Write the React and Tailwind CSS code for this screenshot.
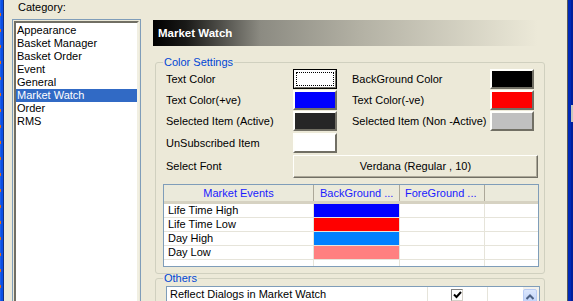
import React from "react";

const font = { fontFamily: '"Liberation Sans", Arial, sans-serif' };

const categories = ["Appearance", "Basket Manager", "Basket Order", "Event", "General", "Market Watch", "Order", "RMS"];

const events = [
  { name: "Life Time High", bg: "bg-[#0000ff]" },
  { name: "Life Time Low", bg: "bg-[#ff0000]" },
  { name: "Day High", bg: "bg-[#0080ff]" },
  { name: "Day Low", bg: "bg-[#ff8080]" },
];

function Swatch({ fill, focused }) {
  if (focused) {
    return (
      <div className="w-[44px] h-[20px] shrink-0 border border-black">
        <div className="w-full h-full border border-t-white border-l-white border-b-[#716f64] border-r-[#716f64] bg-white p-px">
          <div className="w-full h-full border border-dotted border-black" />
        </div>
      </div>
    );
  }
  return (
    <div className={`w-[44px] h-[20px] shrink-0 border-2 border-t-[#fffffb] border-l-[#fffffb] border-b-[#716f64] border-r-[#716f64] ${fill}`} />
  );
}

function Row({ label, fill, rlabel, rfill, focused, className = "" }) {
  return (
    <div className={`flex items-center h-[20px] shrink-0 ${className}`}>
      <div className="w-[127px] shrink-0 truncate">{label}</div>
      <Swatch fill={fill} focused={focused} />
      {rlabel && (
        <>
          <div className="w-[138px] shrink-0 ml-[15px] truncate">{rlabel}</div>
          <Swatch fill={rfill} />
        </>
      )}
    </div>
  );
}

export default function App() {
  return (
    <div className="w-[573px] h-[301px] overflow-hidden flex bg-[#ece9d8] text-[11px] leading-[13px] text-black" style={font}>
      {/* window edge */}
      <div className="w-[4px] h-full flex shrink-0">
        <div className="w-px h-full bg-[repeating-linear-gradient(to_bottom,#1d5fe8_0px,#1d5fe8_13px,#e0701c_13px,#e0701c_16px)]" />
        <div className="w-[2px] h-full bg-[#0a4fe6]" />
        <div className="w-px h-full bg-[#15307a]" />
      </div>

      {/* category column */}
      <div className="w-[148px] h-full flex flex-col shrink-0">
        <div className="pl-[14px] pt-px h-[19px] shrink-0">Category:</div>
        <div className="ml-[8px] w-[129px] flex-1 border border-[#7f9db9] border-b-0 pt-px pl-px pr-px bg-[#ece9d8]">
          <div className="h-full border-2 border-b-0 border-t-[#716f64] border-l-[#716f64] border-r-[#f1efe2] bg-white pt-px">
            {categories.map((c) => (
              <div
                key={c}
                className={`h-[13px] pl-px leading-[13px] ${c === "Market Watch" ? "bg-[#316ac5] text-white" : ""}`}
              >
                {c}
              </div>
            ))}
          </div>
        </div>
      </div>

      {/* settings panel */}
      <div className="w-[415px] h-full flex flex-col shrink-0">
        <div className="shrink-0 mt-[20px] ml-px h-[26px] flex items-center pl-[5px] font-bold text-[11.5px] text-white bg-[linear-gradient(to_right,#000000_0%,#1a1a18_8%,#8c8b82_26%,#b3b1a4_50%,#ece9d8_93%)]">
          Market Watch
        </div>

        <fieldset className="shrink-0 mt-[10px] ml-[3px] w-[390px] border border-[#d0d0bf] rounded-[3px] pb-[6px]">
          <legend className="ml-[7px] px-px text-[#0046d5] leading-[13px]">Color Settings</legend>
          <div className="pl-[10px]">
            <Row label="Text Color" focused rlabel="BackGround Color" rfill="bg-black" />
            <Row className="mt-px" label="Text Color(+ve)" fill="bg-[#0000ff]" rlabel="Text Color(-ve)" rfill="bg-[#ff0000]" />
            <Row className="mt-px" label="Selected Item (Active)" fill="bg-[#262626]" rlabel="Selected Item (Non -Active)" rfill="bg-[#c0c0c0]" />
            <Row className="mt-[2px]" label="UnSubscribed Item" fill="bg-white" />
            <div className="flex items-center h-[23px] mt-[2px]">
              <div className="w-[127px] shrink-0">Select Font</div>
              <div className="w-[245px] h-full shrink-0 flex items-center justify-center border border-t-[#fffffb] border-l-[#fffffb] border-b-[#716f64] border-r-[#716f64] shadow-[inset_-1px_-1px_0_#aca899] bg-[#ece9d8]">
                Verdana (Regular , 10)
              </div>
            </div>
          </div>

          {/* events table */}
          <div className="ml-[7px] mt-[6px] w-[376px] h-[83px] border border-[#7f9db9] bg-white overflow-hidden">
            <div className="flex h-[19px] bg-[#ebeadb] border-b-[3px] border-[#d6d2c2] text-[#1a1aff]">
              <div className="w-[150px] shrink-0 flex items-center justify-center border-r border-[#aca899]">Market Events</div>
              <div className="w-[86px] shrink-0 flex items-center pl-[6px] border-r border-[#aca899] truncate">BackGround ...</div>
              <div className="w-[85px] shrink-0 flex items-center pl-[5px] border-r border-[#aca899] truncate">ForeGround ...</div>
              <div className="flex-1" />
            </div>
            {[...events, { name: "", bg: "" }].map((e, i) => (
              <div key={i} className="flex h-[14px] border-b border-[#e6e4da]">
                <div className="w-[150px] shrink-0 pl-[4px] border-r border-[#e6e4da] leading-[13px]">{e.name}</div>
                <div className={`w-[86px] shrink-0 border-r border-[#e6e4da] ${e.bg}`} />
                <div className="w-[85px] shrink-0 border-r border-[#e6e4da]" />
                <div className="flex-1" />
              </div>
            ))}
          </div>
        </fieldset>

        <fieldset className="shrink-0 -mt-[2px] ml-[3px] w-[390px] h-[60px] border border-[#d0d0bf] rounded-[3px]">
          <legend className="ml-[7px] px-px text-[#0046d5] leading-[13px]">Others</legend>
          <div className="ml-[10px] mt-[1px] w-[374px] h-[30px] border border-[#7f9db9] bg-white flex">
            <div className="flex-1">
              <div className="flex h-[15px] border-b border-[#e6e4da]">
                <div className="w-[261px] shrink-0 pl-[3px] flex items-center border-r border-[#e6e4da]">Reflect Dialogs in Market Watch</div>
                <div className="w-[60px] shrink-0 border-r border-[#e6e4da] flex items-start pt-[2px] pl-[23px]">
                  <div className="w-[12px] h-[12px] border border-[#808080] border-r-[#d4d0c8] border-b-[#d4d0c8] bg-white flex items-center justify-center">
                    <svg width="9" height="8" viewBox="0 0 9 8">
                      <path d="M1 3.5 L3.5 6 L8 1" fill="none" stroke="#000" strokeWidth="2" />
                    </svg>
                  </div>
                </div>
                <div className="flex-1" />
              </div>
              <div className="flex h-[14px]">
                <div className="w-[261px] shrink-0 border-r border-[#e6e4da]" />
                <div className="w-[60px] shrink-0 border-r border-[#e6e4da] pl-[23px] pt-px">
                  <div className="w-[12px] h-[12px] border border-[#808080] bg-white" />
                </div>
              </div>
            </div>
            <div className="w-[16px] shrink-0 pt-[2px] pr-[2px] bg-[#f3f1ec]">
              <div className="w-[14px] h-[15px] rounded-[2px] border border-[#b9ccf5] bg-[linear-gradient(to_bottom,#dce7fd,#bcd0f8)] flex items-center justify-center">
                <svg width="8" height="6" viewBox="0 0 8 6">
                  <path d="M0.5 5 L4 1.5 L7.5 5" fill="none" stroke="#4d6185" strokeWidth="2" />
                </svg>
              </div>
            </div>
          </div>
        </fieldset>
      </div>

      {/* right window edge */}
      <div className="w-[6px] h-full flex shrink-0">
        <div className="w-px h-full bg-[#5a5a58]" />
        <div className="w-[3px] h-full bg-[#0029b8]" />
        <div className="w-[2px] h-full flex flex-col bg-[#001f9c]">
          <div className="h-[105px]" />
          <div className="h-[17px] bg-[#c8c6bc]" />
        </div>
      </div>
    </div>
  );
}
